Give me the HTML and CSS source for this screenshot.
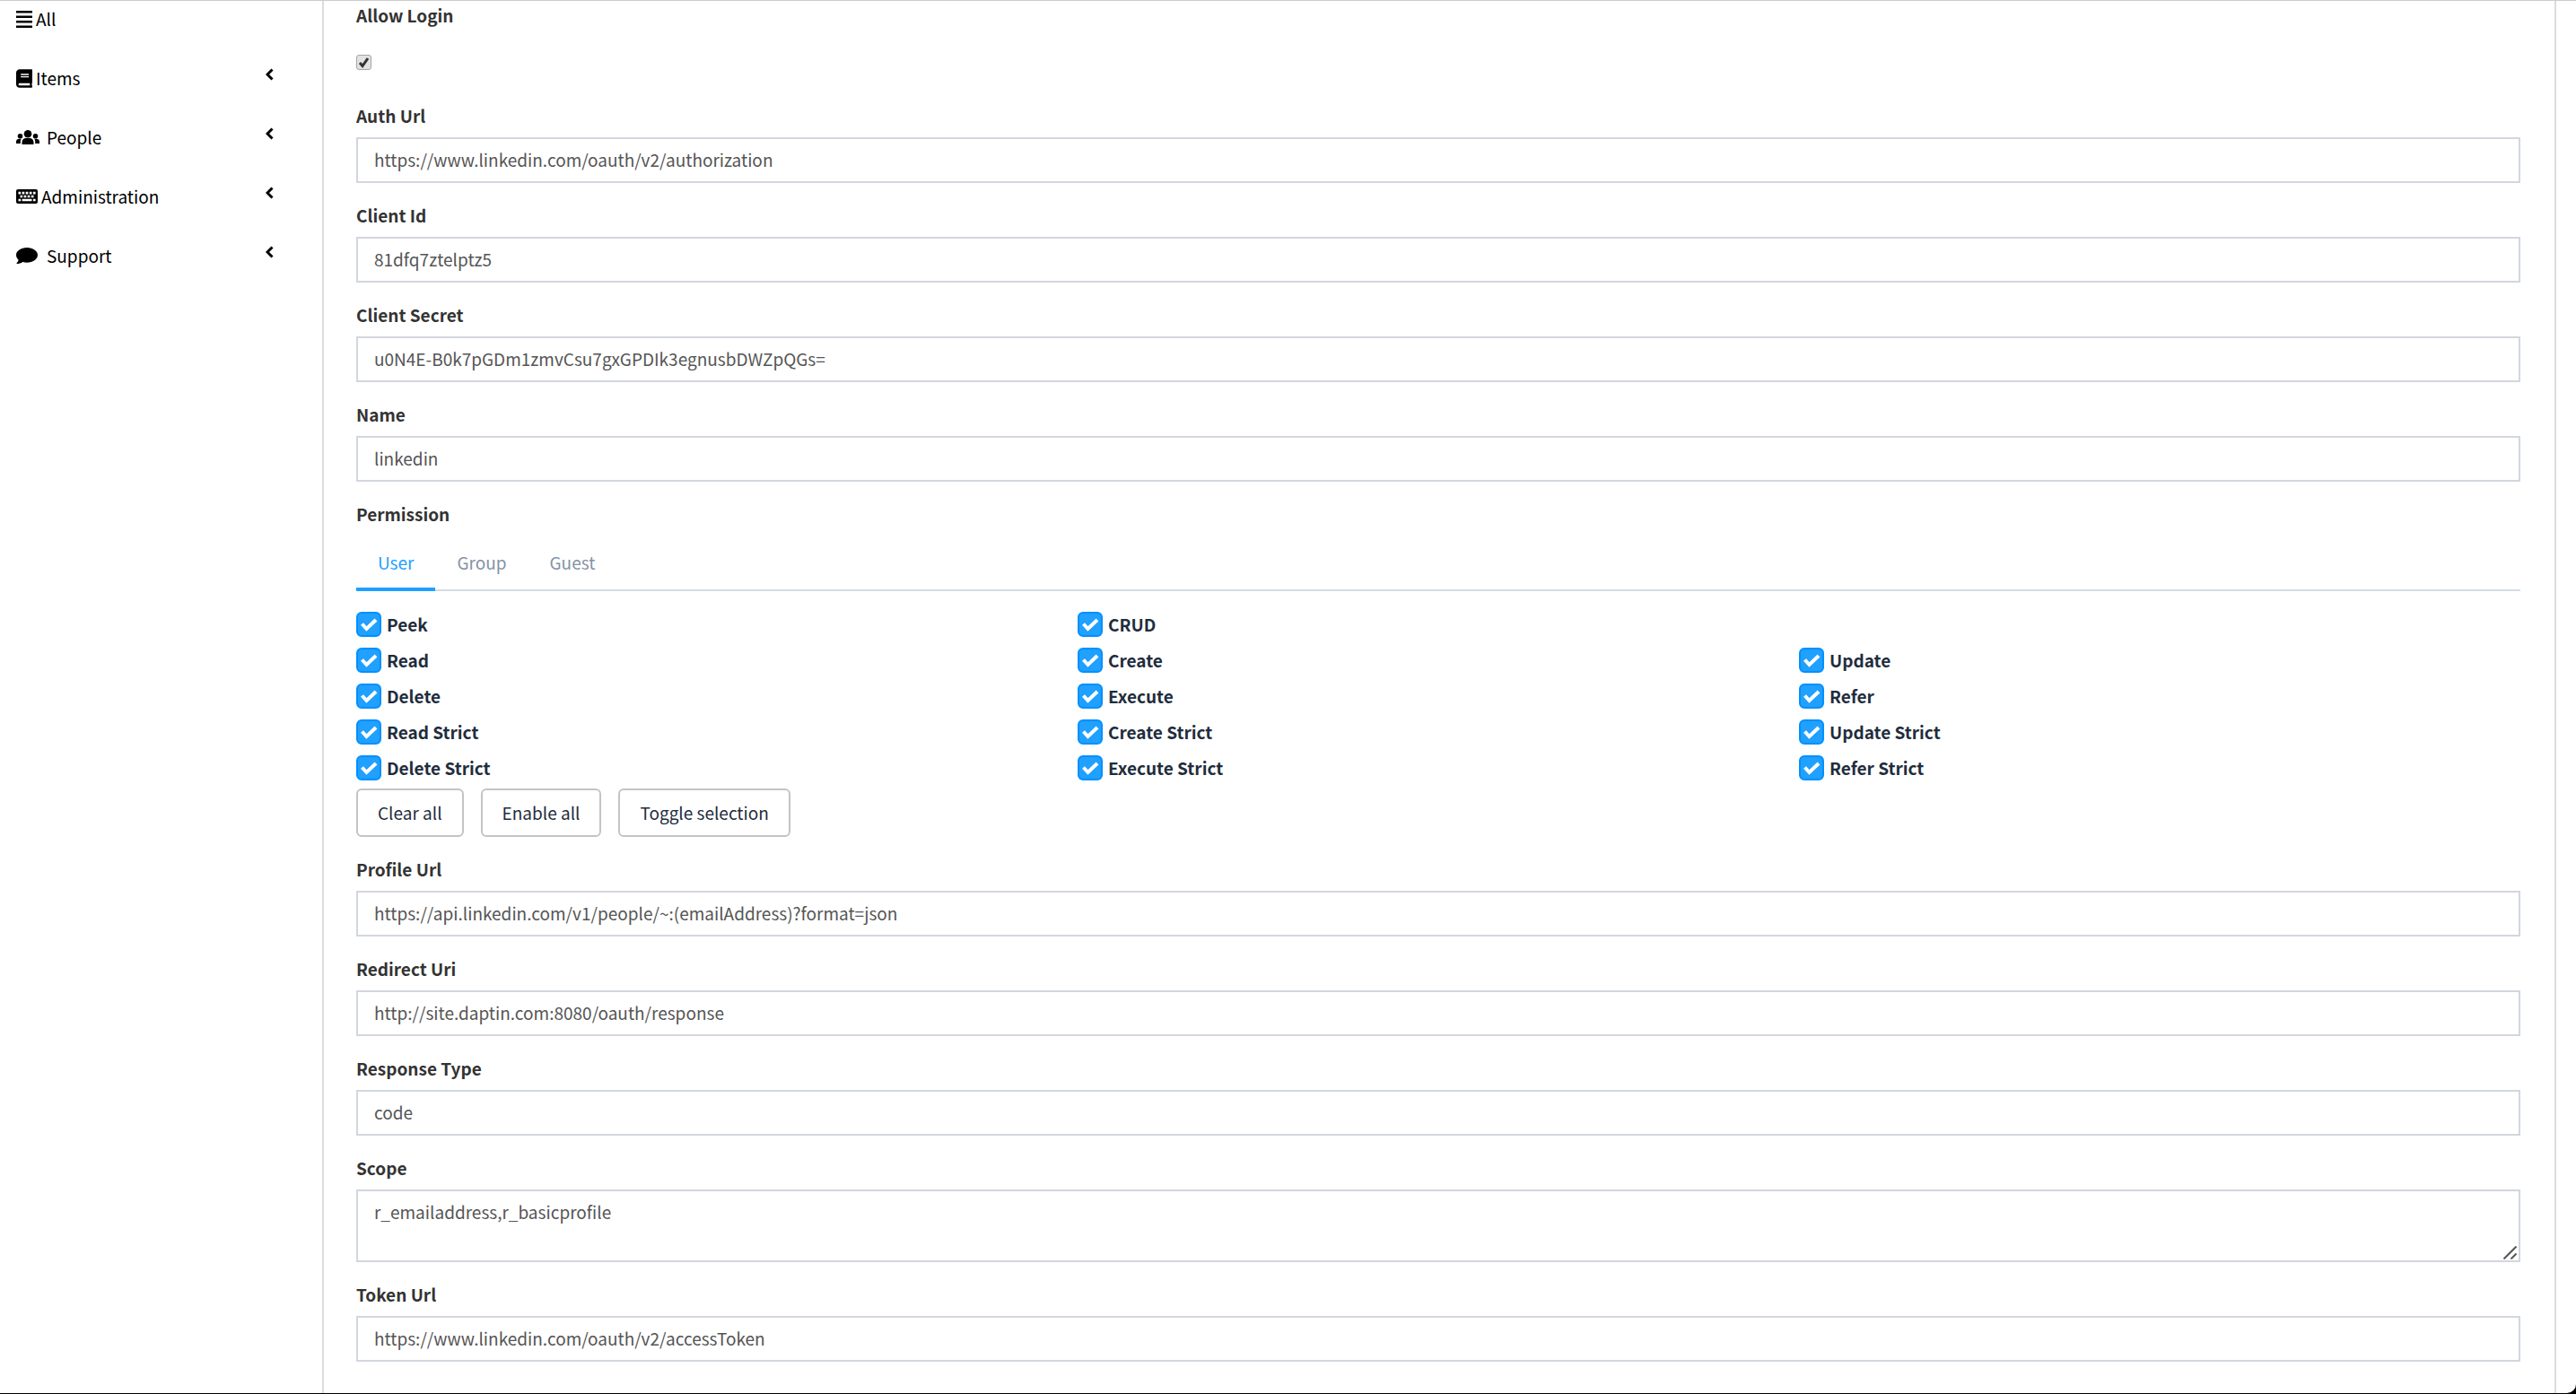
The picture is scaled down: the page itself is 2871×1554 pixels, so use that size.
FILE: index.html
```html
<!DOCTYPE html>
<html lang="en">
<head>
<meta charset="utf-8">
<title>Edit OAuth connection</title>
<link rel="stylesheet" href="styles.css">
</head>
<body>
<div class="app">
  <nav class="sidebar">
    <a class="nav-link" href="#all">
      <svg class="icon icon-list" viewBox="0 0 18 19"><path d="M0 0h18v2.500H0zM0 5.500h18v2.500H0zM0 11h18v2.500H0zM0 16.500h18v2.500H0z"/></svg>
      <span class="nav-text">All</span>
    </a>
    <a class="nav-link" href="#items">
      <svg class="icon icon-book" viewBox="0 0 448 512"><path d="M448 360V24c0-13.300-10.700-24-24-24H96C43 0 0 43 0 96v320c0 53 43 96 96 96h328c13.300 0 24-10.700 24-24v-16c0-7.500-3.500-14.300-8.900-18.700-4.200-15.400-4.200-59.300 0-74.700 5.400-4.300 8.900-11.100 8.900-18.600zM128 134c0-3.300 2.700-6 6-6h212c3.300 0 6 2.700 6 6v20c0 3.300-2.700 6-6 6H134c-3.300 0-6-2.700-6-6v-20zm0 64c0-3.300 2.700-6 6-6h212c3.300 0 6 2.700 6 6v20c0 3.300-2.700 6-6 6H134c-3.300 0-6-2.700-6-6v-20zm253.400 250H96c-17.700 0-32-14.300-32-32 0-17.600 14.400-32 32-32h285.400c-1.900 17.100-1.900 46.900 0 64z"/></svg>
      <span class="nav-text">Items</span>
      <svg class="chevron" viewBox="0 0 9 14"><path d="M7.500 1.500 2 7l5.500 5.500"/></svg>
    </a>
    <a class="nav-link" href="#people">
      <svg class="icon icon-people" viewBox="0 0 26 16"><circle cx="13" cy="4.300" r="4.300"/><circle cx="4.500" cy="6.800" r="2.800"/><circle cx="21.500" cy="6.800" r="2.800"/><path d="M6.500 16v-2.500c0-2.700 2-4.500 4.500-4.500h4c2.500 0 4.500 1.800 4.500 4.500V16zM0 15v-2c0-1.700 1.200-3 2.800-3h2.700c-.6.900-.7 2-.7 3v2zM26 15v-2c0-1.700-1.200-3-2.800-3h-2.700c.6.900.7 2 .7 3v2z"/></svg>
      <span class="nav-text wide">People</span>
      <svg class="chevron" viewBox="0 0 9 14"><path d="M7.500 1.500 2 7l5.500 5.500"/></svg>
    </a>
    <a class="nav-link" href="#administration">
      <svg class="icon icon-keyboard" viewBox="0 0 24 16"><path fill-rule="evenodd" d="M2 0h20a2 2 0 0 1 2 2v12a2 2 0 0 1-2 2H2a2 2 0 0 1-2-2V2a2 2 0 0 1 2-2zM2.500 2.800v2.600h2.700V2.800zM6.600 2.800v2.600h2.700V2.800zM10.700 2.800v2.600h2.700V2.800zM14.800 2.800v2.600h2.700V2.800zM18.900 2.800v2.600h2.700V2.800zM4.500 6.800v2.500h2.700V6.800zM8.600 6.800v2.500h2.700V6.800zM12.700 6.800v2.500h2.700V6.800zM16.800 6.800v2.500h2.700V6.800zM2.500 10.800v2.500h2.700v-2.500zM6.600 10.800v2.500h10.900v-2.500zM18.900 10.800v2.500h2.700v-2.500z"/></svg>
      <span class="nav-text">Administration</span>
      <svg class="chevron" viewBox="0 0 9 14"><path d="M7.500 1.500 2 7l5.500 5.500"/></svg>
    </a>
    <a class="nav-link" href="#support">
      <svg class="icon icon-comment" viewBox="0 0 26 18"><path d="M12 0c6.600 0 12 3.700 12 8.300s-5.400 8.400-12 8.400c-1.700 0-3.300-.2-4.700-.7C5.500 17.400 3.300 18 .7 18c-.3 0-.4-.4-.2-.6 1-1 1.900-2.200 2.100-3.600C1 12.300 0 10.400 0 8.300 0 3.700 5.400 0 12 0z"/></svg>
      <span class="nav-text wide">Support</span>
      <svg class="chevron" viewBox="0 0 9 14"><path d="M7.500 1.500 2 7l5.500 5.500"/></svg>
    </a>
  </nav>
  <main class="content">
    <form class="form">
      <div class="field">
        <label class="label" for="allow-login">Allow Login</label>
        <input class="plain-check" type="checkbox" id="allow-login" checked>
      </div>
      <div class="field">
        <label class="label" for="auth-url">Auth Url</label>
        <input class="control" type="text" id="auth-url" value="https://www.linkedin.com/oauth/v2/authorization">
      </div>
      <div class="field">
        <label class="label" for="client-id">Client Id</label>
        <input class="control" type="text" id="client-id" value="81dfq7ztelptz5">
      </div>
      <div class="field">
        <label class="label" for="client-secret">Client Secret</label>
        <input class="control" type="text" id="client-secret" value="u0N4E-B0k7pGDm1zmvCsu7gxGPDIk3egnusbDWZpQGs=">
      </div>
      <div class="field">
        <label class="label" for="name">Name</label>
        <input class="control" type="text" id="name" value="linkedin">
      </div>
      <div class="field">
        <div class="label" id="permission-label">Permission</div>
        <div class="tabs" role="tablist" aria-labelledby="permission-label">
          <button class="tab active" type="button" role="tab" aria-selected="true">User</button>
          <button class="tab" type="button" role="tab" aria-selected="false">Group</button>
          <button class="tab" type="button" role="tab" aria-selected="false">Guest</button>
        </div>
        <div class="checks">
          <label class="check"><input type="checkbox" checked>Peek</label>
          <label class="check"><input type="checkbox" checked>CRUD</label>
          <label class="check first"><input type="checkbox" checked>Read</label>
          <label class="check"><input type="checkbox" checked>Create</label>
          <label class="check"><input type="checkbox" checked>Update</label>
          <label class="check"><input type="checkbox" checked>Delete</label>
          <label class="check"><input type="checkbox" checked>Execute</label>
          <label class="check"><input type="checkbox" checked>Refer</label>
          <label class="check"><input type="checkbox" checked>Read Strict</label>
          <label class="check"><input type="checkbox" checked>Create Strict</label>
          <label class="check"><input type="checkbox" checked>Update Strict</label>
          <label class="check"><input type="checkbox" checked>Delete Strict</label>
          <label class="check"><input type="checkbox" checked>Execute Strict</label>
          <label class="check"><input type="checkbox" checked>Refer Strict</label>
        </div>
        <div class="actions">
          <button class="button" type="button">Clear all</button>
          <button class="button" type="button">Enable all</button>
          <button class="button" type="button">Toggle selection</button>
        </div>
      </div>
      <div class="field">
        <label class="label" for="profile-url">Profile Url</label>
        <input class="control" type="text" id="profile-url" value="https://api.linkedin.com/v1/people/~:(emailAddress)?format=json">
      </div>
      <div class="field">
        <label class="label" for="redirect-uri">Redirect Uri</label>
        <input class="control" type="text" id="redirect-uri" value="http://site.daptin.com:8080/oauth/response">
      </div>
      <div class="field">
        <label class="label" for="response-type">Response Type</label>
        <input class="control" type="text" id="response-type" value="code">
      </div>
      <div class="field">
        <label class="label" for="scope">Scope</label>
        <div class="area-wrap">
          <textarea class="control area" id="scope" spellcheck="false">r_emailaddress,r_basicprofile</textarea>
          <svg class="grip" viewBox="0 0 15 15"><path d="M.5 14.500 14.500.5M8.500 14.500l6-6"/></svg>
        </div>
      </div>
      <div class="field">
        <label class="label" for="token-url">Token Url</label>
        <input class="control" type="text" id="token-url" value="https://www.linkedin.com/oauth/v2/accessToken">
      </div>
    </form>
  </main>
</div>
</body>
</html>
```
FILE: styles.css
```css
*, *::before, *::after { box-sizing: border-box; }

html { background: #000; }

body {
  margin: 0;
  padding-bottom: 1px;
  font: 19px/30px "Noto Sans CJK SC", "Noto Sans", sans-serif;
  color: #333;
}

input, textarea, button { font: inherit; margin: 0; }

.app {
  display: flex;
  min-height: calc(100vh - 1px);
  padding-right: 22px;
  background: #fff;
  border-top: 1px solid #ccc;
  border-bottom-right-radius: 10px;
}

/* Sidebar */
.sidebar {
  display: flex;
  flex: 0 0 359px;
  flex-direction: column;
  gap: 36px;
  padding: 5px 54px 0 18px;
}

.nav-link {
  display: flex;
  align-items: center;
  gap: 4px;
  color: #000;
  text-decoration: none;
}

.icon { fill: #000; }
.icon-list { width: 18px; height: 19px; }
.icon-book { width: 18px; height: 21px; }
.icon-people { width: 26px; height: 16px; }
.icon-keyboard { width: 24px; height: 16px; }
.icon-comment { width: 26px; height: 18px; }
.nav-text { flex: 1; }
.nav-text.wide { padding-left: 4px; }

.chevron {
  width: 9px;
  height: 14px;
  margin-bottom: 9px;
  fill: none;
  stroke: #000;
  stroke-width: 3;
}

/* Form */
.content {
  flex: 1;
  border: solid #dcdcde;
  border-width: 0 2px;
  padding: 1px 38px 0 36px;
}

.field { margin-bottom: 21px; }

.label {
  display: block;
  margin-bottom: 9px;
  font-weight: 700;
}

.control {
  display: block;
  width: 100%;
  height: 51px;
  padding: 0 18px 2px;
  border: 2px solid #d2d6e0;
  border-radius: 0;
  background: #fff;
  color: #555;
}

.area-wrap { position: relative; }

.area {
  height: 81px;
  padding: 8px 18px;
  resize: none;
}

.grip {
  position: absolute;
  right: 4px;
  bottom: 3px;
  width: 15px;
  height: 15px;
  fill: none;
  stroke: #555;
  stroke-width: 2;
}

input[type="checkbox"] {
  appearance: none;
  flex: none;
  background-position: center;
  background-repeat: no-repeat;
  background-size: contain;
}

.plain-check {
  display: block;
  width: 17px;
  height: 17px;
  margin: 29px 0 36px;
  border: 1px solid #a5a5a5;
  border-radius: 3px;
  background-color: #e2e2e2;
}

.plain-check:checked {
  background-image: url("data:image/svg+xml,%3Csvg xmlns='http://www.w3.org/2000/svg' viewBox='0 0 15 15'%3E%3Cpath d='M3 8l3 3.500L12 3' fill='none' stroke='%23333' stroke-width='3'/%3E%3C/svg%3E");
}

/* Permission tabs */
.tabs {
  display: flex;
  box-shadow: inset 0 -2px #d3dce6;
}

.tab {
  padding: 15px 24px 13px;
  border: 0;
  border-bottom: 4px solid transparent;
  background: none;
  color: #8492a6;
}

.tab.active {
  border-bottom-color: #20a0ff;
  color: #20a0ff;
}

.checks {
  display: grid;
  grid-template-columns: repeat(3, 1fr);
  row-gap: 12px;
  margin-top: 23px;
}

.check {
  display: flex;
  align-items: center;
  gap: 6px;
  height: 28px;
  color: #1f2d3d;
  font-weight: 700;
}

.check.first { grid-column: 1; }

.check input {
  width: 28px;
  height: 28px;
  border: 2px solid #0190fe;
  border-radius: 6px;
  background-color: #20a0ff;
}

.check input:checked {
  background-image: url("data:image/svg+xml,%3Csvg xmlns='http://www.w3.org/2000/svg' viewBox='0 0 24 24'%3E%3Cpath d='M4.500 11.500l5 5.500L20 7' fill='none' stroke='%23fff' stroke-width='4'/%3E%3C/svg%3E");
}

.actions {
  display: flex;
  gap: 19px;
  margin-top: 9px;
}

.button {
  padding: 10px 22px;
  border: 2px solid #c4c4c4;
  border-radius: 6px;
  background: #fff;
  color: #1f2d3d;
}
```
